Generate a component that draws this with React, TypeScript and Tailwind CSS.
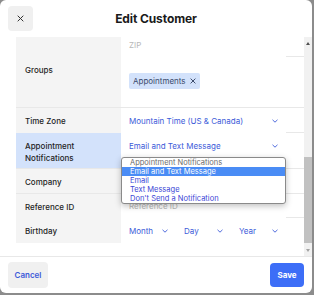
import type { ReactNode } from "react"

function Chevron() {
  return (
    <svg width="6" height="4" viewBox="0 0 6 4" className="shrink-0">
      <path d="M0.5 0.8 L3 3.2 L5.5 0.8" fill="none" stroke="#3d5bd9" strokeWidth="0.9" />
    </svg>
  )
}

function Row({
  label,
  height,
  highlight = false,
  className = "",
  children,
}: {
  label?: ReactNode
  height: string
  highlight?: boolean
  className?: string
  children?: ReactNode
}) {
  return (
    <div className={`grid grid-cols-[105px_165px] border-b border-[#e8e8e8] ${height} ${className}`}>
      <div
        className={`px-[9px] pt-[7px] text-[8px] font-medium leading-[12px] text-[#1f1f1f] ${
          highlight ? "bg-[#d3e2fb]" : "bg-[#f4f4f4]"
        }`}
      >
        {label}
      </div>
      <div className="relative bg-white">{children}</div>
    </div>
  )
}

function SelectValue({ value }: { value: string }) {
  return (
    <div className="flex h-[25px] items-center justify-between pl-[8px] pr-[8px] text-[8px] text-[#3d5bd9]">
      <span>{value}</span>
      <Chevron />
    </div>
  )
}

const options = [
  "Email and Text Message",
  "Email",
  "Text Message",
  "Don't Send a Notification",
]

export default function App() {
  return (
    <div className="h-[295px] w-[314px] bg-[#8c8c8c] font-['Inter',sans-serif]">
      <div className="flex h-[293px] w-[312px] flex-col overflow-hidden rounded-[6px] bg-white">
        {/* Header */}
        <div className="flex h-[37px] shrink-0 items-center px-[8px]">
          <button className="flex h-[25px] w-[25px] items-center justify-center rounded-[4px] bg-[#f0f0f0]">
            <svg width="7" height="7" viewBox="0 0 7 7">
              <path d="M0.7 0.7 L6.3 6.3 M6.3 0.7 L0.7 6.3" stroke="#333" strokeWidth="1" />
            </svg>
          </button>
          <h1 className="flex-1 pt-[1px] text-center text-[12px] font-bold tracking-[-0.1px] text-[#1a1a1a]">
            Edit Customer
          </h1>
          <div className="w-[25px]" />
        </div>

        {/* Scroll area */}
        <div className="flex h-[219px] shrink-0">
          <div className="flex-1 overflow-hidden pl-[16px]">
            <Row height="h-[25px]" className="-mt-[5px]">
              <div className="flex h-[25px] items-center pl-[8px] text-[8px] text-[#b8b8b8]">ZIP</div>
            </Row>
            <Row label="Groups" height="h-[51px]">
              <div className="pl-[8px] pt-[9px]">
                <span className="inline-flex h-[16px] items-center gap-[4px] rounded-[2px] bg-[#d3e2fb] px-[4px] text-[8px] text-[#3a4a6b]">
                  Appointments
                  <svg width="6" height="6" viewBox="0 0 6 6">
                    <path d="M0.6 0.6 L5.4 5.4 M5.4 0.6 L0.6 5.4" stroke="#2f3d5c" strokeWidth="0.9" />
                  </svg>
                </span>
              </div>
            </Row>
            <Row label="Time Zone" height="h-[25px]">
              <SelectValue value="Mountain Time (US & Canada)" />
            </Row>
            <Row
              label={
                <>
                  Appointment
                  <br />
                  Notifications
                </>
              }
              height="h-[36px]"
              highlight
            >
              <SelectValue value="Email and Text Message" />
              <div className="absolute left-0 top-[24px] z-10 w-[165px] rounded-[3px] border border-[#8a8a8a] bg-white text-[7.5px] leading-[9px] shadow-[0_2px_6px_rgba(0,0,0,0.25)]">
                <div className="pl-[8px] text-[#6b6b6b]">Appointment Notifications</div>
                {options.map((o, i) => (
                  <div
                    key={o}
                    className={`pl-[8px] ${i === 0 ? "bg-[#4a8cf5] text-white" : "text-[#3b45d6]"}`}
                  >
                    {o}
                  </div>
                ))}
              </div>
            </Row>
            <Row label="Company" height="h-[25px]" />
            <Row label="Reference ID" height="h-[24px]">
              <div className="flex h-[24px] items-center pl-[8px] text-[8px] text-[#b8b8b8]">Reference ID</div>
            </Row>
            <Row label="Birthday" height="h-[25px]" className="border-b-0">
              <div className="grid grid-cols-3">
                <SelectValue value="Month" />
                <SelectValue value="Day" />
                <SelectValue value="Year" />
              </div>
            </Row>
          </div>

          {/* Scrollbar */}
          <div className="flex w-[8px] flex-col bg-[#f1f1f1]">
            <div className="flex h-[12px] items-center justify-center">
              <div className="h-0 w-0 border-x-[2.5px] border-b-[3px] border-x-transparent border-b-[#505050]" />
            </div>
            <div className="flex-1 pt-[108px]">
              <div className="mx-auto h-[86px] w-[8px] bg-[#c1c1c1]" />
            </div>
            <div className="flex h-[12px] items-center justify-center">
              <div className="h-0 w-0 border-x-[2.5px] border-t-[3px] border-x-transparent border-t-[#a3a3a3]" />
            </div>
          </div>
        </div>

        {/* Footer */}
        <div className="flex flex-1 items-center justify-between border-t border-[#e8e8e8] px-[8px]">
          <button className="h-[26px] w-[40px] rounded-[4px] bg-[#f0f0f0] text-[8px] font-semibold text-[#3d5bd9]">
            Cancel
          </button>
          <button className="h-[24px] w-[34px] rounded-[4px] bg-[#3d6ef7] text-[8px] font-bold text-white">
            Save
          </button>
        </div>
      </div>
    </div>
  )
}
